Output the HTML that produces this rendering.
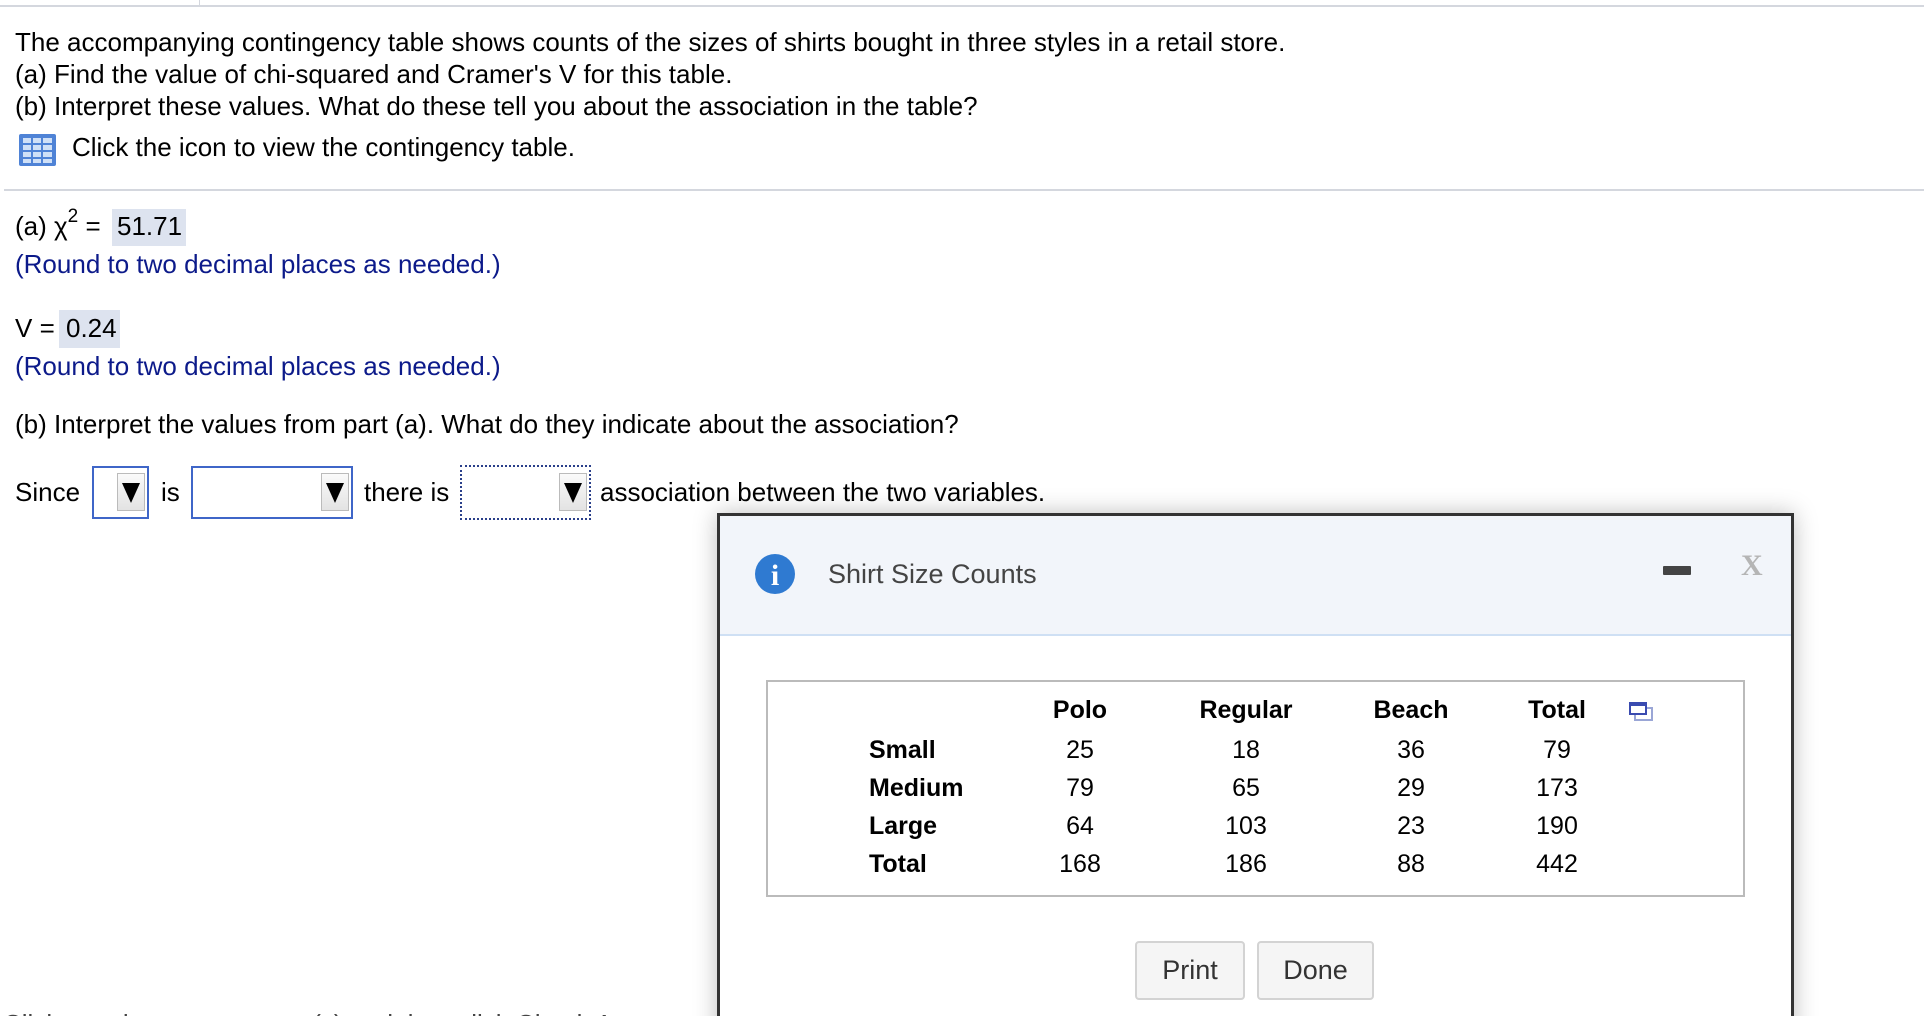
<!DOCTYPE html>
<html><head><meta charset="utf-8"><style>
html,body{margin:0;padding:0;width:1924px;height:1016px;overflow:hidden;background:#fff;font-family:"Liberation Sans",Arial,sans-serif;color:#000;}
#w{position:relative;width:1924px;height:1016px;overflow:hidden;}
.a{position:absolute;white-space:nowrap;font-size:26px;line-height:30px;}
.navy{color:#0c1a8a;}
.box{position:absolute;background:#dde3ef;}
.dd{position:absolute;border:2px solid #3f66c8;box-sizing:border-box;background:#fff;}
.dd .arr{position:absolute;right:2px;top:4px;width:28px;height:38px;background:linear-gradient(#fafafa,#e3e3e3);border:1px solid #bbb;box-sizing:border-box;}
.dd .arr:after{content:"";position:absolute;left:4px;top:9px;border-left:9px solid transparent;border-right:9px solid transparent;border-top:20px solid #000;}
.th{position:absolute;font-weight:bold;font-size:25px;line-height:28px;transform:translateX(-50%);}
.td{position:absolute;font-size:25px;line-height:28px;transform:translateX(-50%);}
.rl{position:absolute;font-weight:bold;font-size:25px;line-height:28px;left:869px;}
.btn{position:absolute;top:941px;height:59px;background:#f5f5f5;border:2px solid #d3d3d3;border-radius:4px;box-sizing:border-box;font-size:27px;color:#333;text-align:center;line-height:55px;}
</style></head><body><div id="w">
<div style="position:absolute;left:0;top:5px;width:1924px;height:2px;background:#d4d7de"></div>
<div style="position:absolute;left:199px;top:0;width:1px;height:5px;background:#d4d7de"></div>

<div class="a" style="left:15px;top:27px">The accompanying contingency table shows counts of the sizes of shirts bought in three styles in a retail store.</div>
<div class="a" style="left:15px;top:59px">(a) Find the value of chi-squared and Cramer's V for this table.</div>
<div class="a" style="left:15px;top:91px">(b) Interpret these values. What do these tell you about the association in the table?</div>
<svg style="position:absolute;left:19px;top:134px" width="37" height="32" viewBox="0 0 37 32">
<rect x="0" y="0" width="37" height="32" rx="2" fill="#4f83d6"/>
<g fill="#cfe0f7">
<rect x="4" y="4" width="8" height="5"/><rect x="14" y="4" width="8" height="5"/><rect x="24" y="4" width="9" height="5"/>
<rect x="4" y="11" width="8" height="5"/><rect x="14" y="11" width="8" height="5"/><rect x="24" y="11" width="9" height="5"/>
<rect x="4" y="18" width="8" height="5"/><rect x="14" y="18" width="8" height="5"/><rect x="24" y="18" width="9" height="5"/>
<rect x="4" y="25" width="8" height="4"/><rect x="14" y="25" width="8" height="4"/><rect x="24" y="25" width="9" height="4"/>
</g></svg>
<div class="a" style="left:72px;top:132px">Click the icon to view the contingency table.</div>
<div style="position:absolute;left:4px;top:189px;width:1920px;height:2px;background:#d4d7de"></div>

<div class="box" style="left:112px;top:209px;width:74px;height:37px"></div>
<div class="a" style="left:15px;top:211px">(a) χ<sup style="font-size:19px;line-height:0;position:relative;top:-3px">2</sup> =</div>
<div class="a" style="left:117px;top:211px">51.71</div>
<div class="a navy" style="left:15px;top:249px">(Round to two decimal places as needed.)</div>

<div class="box" style="left:59px;top:310px;width:61px;height:38px"></div>
<div class="a" style="left:15px;top:313px">V =</div>
<div class="a" style="left:66px;top:313px">0.24</div>
<div class="a navy" style="left:15px;top:351px">(Round to two decimal places as needed.)</div>

<div class="a" style="left:15px;top:409px">(b) Interpret the values from part (a). What do they indicate about the association?</div>

<div class="a" style="left:15px;top:477px">Since</div>
<div class="dd" style="left:92px;top:466px;width:57px;height:53px"><div class="arr" style="top:5px"></div></div>
<div class="a" style="left:161px;top:477px">is</div>
<div class="dd" style="left:191px;top:466px;width:162px;height:53px"><div class="arr" style="top:5px"></div></div>
<div class="a" style="left:364px;top:477px">there is</div>
<div class="dd" style="left:460px;top:465px;width:131px;height:55px;border:2px dotted #2a3f8a"><div class="arr" style="top:6px"></div></div>
<div class="a" style="left:600px;top:477px">association between the two variables.</div>

<div class="a" style="left:3px;top:1009px;color:#444">Click to select your answer(s) and then click Check Answer.</div>

<div style="position:absolute;left:717px;top:513px;width:1077px;height:560px;border:3px solid #333;box-sizing:border-box;background:#fff;box-shadow:0 0 22px rgba(0,0,0,0.25)">
 <div style="position:absolute;left:0;top:0;right:0;height:118px;background:#f2f5fa;border-bottom:2px solid #cfe0f4"></div>
</div>
<svg style="position:absolute;left:755px;top:554px" width="40" height="40" viewBox="0 0 40 40"><circle cx="20" cy="20" r="20" fill="#2f7ad1"/><text x="20" y="31" text-anchor="middle" font-family="Liberation Serif,serif" font-weight="bold" font-size="30" fill="#fff">i</text></svg>
<div class="a" style="left:828px;top:559px;font-size:27px;color:#444">Shirt Size Counts</div>
<div style="position:absolute;left:1663px;top:566px;width:28px;height:9px;background:#444;border-radius:1px"></div>
<div class="a" style="left:1741px;top:551px;font-size:30px;color:#b5b5b5;font-weight:bold;font-family:'Liberation Serif',serif">X</div>

<div style="position:absolute;left:766px;top:680px;width:979px;height:217px;border:2px solid #bbb;box-sizing:border-box"></div>
<div class="th" style="left:1080px;top:696px">Polo</div>
<div class="th" style="left:1246px;top:696px">Regular</div>
<div class="th" style="left:1411px;top:696px">Beach</div>
<div class="th" style="left:1557px;top:696px">Total</div>
<svg style="position:absolute;left:1629px;top:702px" width="25" height="20" viewBox="0 0 25 20"><rect x="6" y="6" width="17" height="12" fill="none" stroke="#9aa6d6" stroke-width="2"/><rect x="1" y="1" width="16" height="11" fill="#fff" stroke="#3a4bb0" stroke-width="2"/><rect x="1" y="1" width="16" height="3" fill="#3a4bb0"/></svg>

<div class="rl" style="top:736px">Small</div>
<div class="td" style="left:1080px;top:736px">25</div><div class="td" style="left:1246px;top:736px">18</div><div class="td" style="left:1411px;top:736px">36</div><div class="td" style="left:1557px;top:736px">79</div>
<div class="rl" style="top:774px">Medium</div>
<div class="td" style="left:1080px;top:774px">79</div><div class="td" style="left:1246px;top:774px">65</div><div class="td" style="left:1411px;top:774px">29</div><div class="td" style="left:1557px;top:774px">173</div>
<div class="rl" style="top:812px">Large</div>
<div class="td" style="left:1080px;top:812px">64</div><div class="td" style="left:1246px;top:812px">103</div><div class="td" style="left:1411px;top:812px">23</div><div class="td" style="left:1557px;top:812px">190</div>
<div class="rl" style="top:850px">Total</div>
<div class="td" style="left:1080px;top:850px">168</div><div class="td" style="left:1246px;top:850px">186</div><div class="td" style="left:1411px;top:850px">88</div><div class="td" style="left:1557px;top:850px">442</div>

<div class="btn" style="left:1135px;width:110px">Print</div>
<div class="btn" style="left:1257px;width:117px">Done</div>
</div></body></html>
